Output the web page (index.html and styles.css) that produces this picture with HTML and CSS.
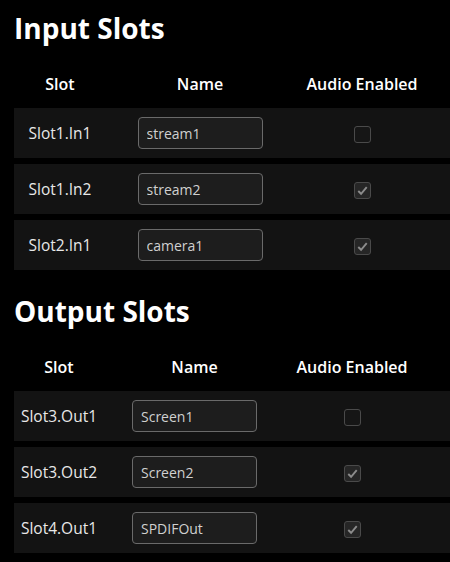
FILE: index.html
```html
<!DOCTYPE html>
<html lang="en">
<head>
    <meta charset="UTF-8">
    <meta name="viewport" content="width=device-width, initial-scale=1.0">
    <title>Slots</title>
    <link rel="stylesheet" href="styles.css">
</head>
<body>
    <section class="slots inputs">
        <h2>Input Slots</h2>
        <div class="grid head">
            <div>Slot</div>
            <div>Name</div>
            <div>Audio Enabled</div>
        </div>
        <div class="grid row">
            <div class="label">Slot1.In1</div>
            <div><input type="text" value="stream1"></div>
            <div><span class="check"></span></div>
        </div>
        <div class="grid row">
            <div class="label">Slot1.In2</div>
            <div><input type="text" value="stream2"></div>
            <div><span class="check on"><svg viewBox="0 0 16 16"><polyline points="3.5,8.5 6.5,11.5 12.5,4.5"/></svg></span></div>
        </div>
        <div class="grid row">
            <div class="label">Slot2.In1</div>
            <div><input type="text" value="camera1"></div>
            <div><span class="check on"><svg viewBox="0 0 16 16"><polyline points="3.5,8.5 6.5,11.5 12.5,4.5"/></svg></span></div>
        </div>
    </section>

    <section class="slots outputs">
        <h2>Output Slots</h2>
        <div class="grid head">
            <div>Slot</div>
            <div>Name</div>
            <div>Audio Enabled</div>
        </div>
        <div class="grid row">
            <div class="label">Slot3.Out1</div>
            <div><input type="text" value="Screen1"></div>
            <div><span class="check"></span></div>
        </div>
        <div class="grid row">
            <div class="label">Slot3.Out2</div>
            <div><input type="text" value="Screen2"></div>
            <div><span class="check on"><svg viewBox="0 0 16 16"><polyline points="3.5,8.5 6.5,11.5 12.5,4.5"/></svg></span></div>
        </div>
        <div class="grid row">
            <div class="label">Slot4.Out1</div>
            <div><input type="text" value="SPDIFOut"></div>
            <div><span class="check on"><svg viewBox="0 0 16 16"><polyline points="3.5,8.5 6.5,11.5 12.5,4.5"/></svg></span></div>
        </div>
    </section>
</body>
</html>
```

FILE: styles.css
```css
* {
    margin: 0;
    padding: 0;
    box-sizing: border-box;
}

html, body {
    background-color: #000;
}

body {
    font-family: "Open Sans", Arial, sans-serif;
    color: #fff;
    padding: 12px 0 0 14px;
    overflow: hidden;
}

h2 {
    font-size: 28px;
    font-weight: 700;
    line-height: 32px;
    margin-bottom: 16px;
}

.outputs {
    margin-top: 25px;
}

.grid {
    display: grid;
    align-items: center;
    text-align: center;
}

.inputs .grid {
    grid-template-columns: 92px 188px 136px 1fr;
}

.outputs .grid {
    grid-template-columns: 90px 181px 134px 1fr;
}

.head {
    height: 48px;
    font-size: 16px;
    font-weight: 600;
}

.row {
    height: 50px;
    background-color: #131313;
    margin-bottom: 6px;
    font-size: 15.5px;
    color: #e8e8e8;
}

.row input {
    width: 125px;
    height: 32px;
    background-color: #1d1d1d;
    border: 1px solid #6a6a6a;
    border-radius: 4px;
    color: #d0d0d0;
    font-family: inherit;
    font-size: 14px;
    padding: 0 8px;
    outline: none;
    display: block;
    margin: 0 auto;
}

.check {
    display: inline-block;
    width: 17px;
    height: 17px;
    border: 1px solid #4a4a4a;
    border-radius: 3px;
    background-color: #161616;
    vertical-align: middle;
}

.check.on {
    background-color: #262626;
}

.check svg {
    display: block;
    width: 15px;
    height: 15px;
    fill: none;
    stroke: #8c8c8c;
    stroke-width: 2;
}
```
